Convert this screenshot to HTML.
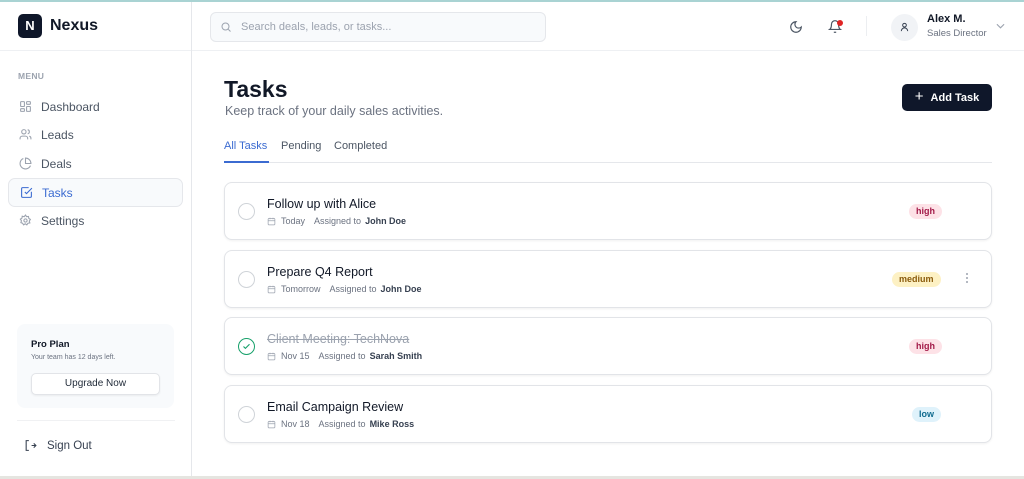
<!DOCTYPE html>
<html><head><style>
*{box-sizing:border-box;margin:0;padding:0}
body{width:1024px;height:479px;overflow:hidden;background:#fff;font-family:"Liberation Sans",sans-serif;color:#111827;position:relative}
.abs{position:absolute}
.top{left:0;top:0;width:1024px;height:2px;background:#a9d3d3}
.bot{left:0;top:476px;width:1024px;height:3px;background:#e5e5e0}
.side{left:0;top:2px;width:192px;height:474px;border-right:1px solid #e5e7eb;background:#fff}
.nav{position:absolute;left:8px;width:175px;height:29px;display:flex;align-items:center;padding-left:11px;font-size:12px;color:#4b5563}
.nav svg{margin-right:9px}
.nav.act{background:#f8fafc;border:1px solid #e5e7eb;border-radius:7px;color:#3b6bd1}
.card{position:absolute;left:224px;width:768px;height:58px;border:1px solid #e2e4e8;border-radius:8px;box-shadow:0 1px 2px rgba(0,0,0,.06);background:#fff}
.radio{position:absolute;left:13px;top:20px;width:17px;height:17px;border:1.5px solid #cfd3d8;border-radius:50%}
.tt{position:absolute;left:42px;top:14px;font-size:12.5px;color:#111827}
.meta{position:absolute;left:42px;top:33px;font-size:9px;color:#6b7280;display:flex;align-items:center}
.meta b{color:#374151;font-weight:600;margin-left:4px}
.badge{position:absolute;top:21px;height:15px;border-radius:8px;font-size:9px;font-weight:bold;line-height:15px;padding:0 7px}
.high{background:#fde2e7;color:#a21a48}
.med{background:#fdf1c4;color:#8a5a0b}
.low{background:#dff2fb;color:#0f6b8f}
</style></head><body>
<div class="abs top"></div>
<div class="abs side">
 <div class="abs" style="left:18px;top:12px;width:24px;height:24px;background:#0f172a;border-radius:5px;color:#fff;font-weight:bold;font-size:13px;text-align:center;line-height:24px">N</div>
 <div class="abs" style="left:50px;top:15px;font-size:16px;font-weight:bold">Nexus</div>
 <div class="abs" style="left:0;top:48px;width:191px;height:1px;background:#eef0f3"></div>
 <div class="abs" style="left:18px;top:69px;font-size:8.5px;font-weight:bold;color:#9ca3af;letter-spacing:.3px">MENU</div>
 <div class="nav" style="top:90px"><svg width="13" height="13" viewBox="0 0 24 24" fill="none" stroke="#9ca3af" stroke-width="2"><rect x="3" y="3" width="7" height="9" rx="1"/><rect x="14" y="3" width="7" height="5" rx="1"/><rect x="14" y="12" width="7" height="9" rx="1"/><rect x="3" y="16" width="7" height="5" rx="1"/></svg>Dashboard</div>
 <div class="nav" style="top:118px"><svg width="13" height="13" viewBox="0 0 24 24" fill="none" stroke="#9ca3af" stroke-width="2"><circle cx="9" cy="7" r="4"/><path d="M2 21v-2a4 4 0 0 1 4-4h6a4 4 0 0 1 4 4v2M16 3.1a4 4 0 0 1 0 7.8M22 21v-2a4 4 0 0 0-3-3.9"/></svg>Leads</div>
 <div class="nav" style="top:147px"><svg width="13" height="13" viewBox="0 0 24 24" fill="none" stroke="#9ca3af" stroke-width="2"><path d="M21.2 15.9A10 10 0 1 1 8 2.8"/><path d="M22 12A10 10 0 0 0 12 2v10z"/></svg>Deals</div>
 <div class="nav act" style="top:176px"><svg width="13" height="13" viewBox="0 0 24 24" fill="none" stroke="#3b6bd1" stroke-width="2"><path d="M21 10.5V19a2 2 0 0 1-2 2H5a2 2 0 0 1-2-2V5a2 2 0 0 1 2-2h11"/><path d="m9 11 3 3L22 4"/></svg>Tasks</div>
 <div class="nav" style="top:204px"><svg width="13" height="13" viewBox="0 0 24 24" fill="none" stroke="#9ca3af" stroke-width="2"><circle cx="12" cy="12" r="3"/><path d="M12 2l2 3 3.5-.5.5 3.5 3 2-2 3 1 3.5-3.5.5-2 3-3-2-3 2-2-3L3.5 16l1-3.5-2-3 3-2 .5-3.5L9.5 5z"/></svg>Settings</div>
 <div class="abs" style="left:17px;top:322px;width:157px;height:84px;background:#f8fafc;border-radius:8px">
  <div class="abs" style="left:14px;top:15px;font-size:9.5px;font-weight:bold">Pro Plan</div>
  <div class="abs" style="left:14px;top:30px;font-size:7px;color:#6b7280">Your team has 12 days left.</div>
  <div class="abs" style="left:14px;top:49px;width:129px;height:22px;background:#fff;border:1px solid #e2e4e8;border-radius:5px;box-shadow:0 1px 2px rgba(0,0,0,.06);font-size:10px;text-align:center;line-height:20px;color:#1f2937">Upgrade Now</div>
 </div>
 <div class="abs" style="left:17px;top:418px;width:158px;height:1px;background:#f0f1f3"></div>
 <div class="abs" style="left:24px;top:437px;display:flex;align-items:center;font-size:11.5px;color:#374151"><svg width="13" height="13" viewBox="0 0 24 24" fill="none" stroke="#374151" stroke-width="2" style="margin-right:10px"><path d="M9 3H4v18h5M14 12h8M18 8l4 4-4 4"/></svg>Sign Out</div>
</div>
<!-- header -->
<div class="abs" style="left:192px;top:50px;width:832px;height:1px;background:#eef0f3"></div>
<div class="abs" style="left:210px;top:12px;width:336px;height:30px;background:#f8fafc;border:1px solid #e5e7eb;border-radius:6px">
 <svg class="abs" style="left:9px;top:8px" width="12" height="12" viewBox="0 0 24 24" fill="none" stroke="#9ca3af" stroke-width="2"><circle cx="11" cy="11" r="7"/><path d="m21 21-4.3-4.3"/></svg>
 <div class="abs" style="left:30px;top:8px;font-size:11px;color:#9ca3af">Search deals, leads, or tasks...</div>
</div>
<svg class="abs" style="left:789px;top:20px" width="14" height="14" viewBox="0 0 24 24" fill="none" stroke="#4b5563" stroke-width="2"><path d="M12 3a6 6 0 0 0 9 9 9 9 0 1 1-9-9z"/></svg>
<svg class="abs" style="left:828px;top:19px" width="14" height="15" viewBox="0 0 24 24" fill="none" stroke="#4b5563" stroke-width="2"><path d="M6 8a6 6 0 0 1 12 0c0 7 3 9 3 9H3s3-2 3-9M10.3 21a1.9 1.9 0 0 0 3.4 0"/></svg>
<div class="abs" style="left:837px;top:20px;width:6px;height:6px;border-radius:50%;background:#e02424"></div>
<div class="abs" style="left:866px;top:16px;width:1px;height:20px;background:#eceef1"></div>
<div class="abs" style="left:891px;top:14px;width:27px;height:27px;border-radius:50%;background:#f1f3f6"></div>
<svg class="abs" style="left:899px;top:21px" width="11" height="12" viewBox="0 0 24 24" fill="none" stroke="#374151" stroke-width="2.2"><circle cx="12" cy="8" r="4"/><path d="M5 21a7 7 0 0 1 14 0"/></svg>
<div class="abs" style="left:927px;top:13px;font-size:11px;font-weight:bold">Alex M.</div>
<div class="abs" style="left:927px;top:28px;font-size:9.5px;color:#6b7280">Sales Director</div>
<svg class="abs" style="left:996px;top:23px" width="9" height="6" viewBox="0 0 10 6" fill="none" stroke="#9ca3af" stroke-width="1.2"><path d="M1 1l4 4 4-4"/></svg>
<!-- main -->
<div class="abs" style="left:224px;top:76px;font-size:23px;font-weight:bold">Tasks</div>
<div class="abs" style="left:225px;top:104px;font-size:12.5px;color:#6b7280">Keep track of your daily sales activities.</div>
<div class="abs" style="left:902px;top:84px;width:90px;height:27px;background:#0f172a;border-radius:5px;color:#fff;font-size:11px;font-weight:bold;display:flex;align-items:center;justify-content:center"><span style="font-size:15px;font-weight:normal;margin-right:7px;margin-top:-2px">+</span>Add Task</div>
<div class="abs" style="left:224px;top:140px;font-size:11px;color:#3b6bd1">All Tasks</div>
<div class="abs" style="left:281px;top:140px;font-size:11px;color:#4b5563">Pending</div>
<div class="abs" style="left:334px;top:140px;font-size:11px;color:#4b5563">Completed</div>
<div class="abs" style="left:224px;top:162px;width:768px;height:1px;background:#e5e7eb"></div>
<div class="abs" style="left:224px;top:161px;width:45px;height:2px;background:#3b6bd1"></div>

<div class="card" style="top:182px"><div class="radio"></div><div class="tt">Follow up with Alice</div>
<div class="meta"><svg width="9" height="9" viewBox="0 0 24 24" fill="none" stroke="#9ca3af" stroke-width="2" style="margin-right:5px"><rect x="3" y="4" width="18" height="17" rx="2"/><path d="M3 10h18M8 2v4M16 2v4"/></svg>Today<span style="margin-left:9px">Assigned to</span><b>John Doe</b></div>
<div class="badge high" style="left:684px">high</div></div>

<div class="card" style="top:250px"><div class="radio"></div><div class="tt">Prepare Q4 Report</div>
<div class="meta"><svg width="9" height="9" viewBox="0 0 24 24" fill="none" stroke="#9ca3af" stroke-width="2" style="margin-right:5px"><rect x="3" y="4" width="18" height="17" rx="2"/><path d="M3 10h18M8 2v4M16 2v4"/></svg>Tomorrow<span style="margin-left:9px">Assigned to</span><b>John Doe</b></div>
<div class="badge med" style="left:667px">medium</div>
<div class="abs" style="left:741px;top:22px;width:2px;height:2px;background:#9ca3af;box-shadow:0 4px 0 #9ca3af,0 8px 0 #9ca3af;border-radius:1px"></div></div>

<div class="card" style="top:317px"><div class="radio" style="border:1.5px solid #16a06a"><svg class="abs" style="left:3px;top:3px" width="9" height="9" viewBox="0 0 24 24" fill="none" stroke="#16a06a" stroke-width="3"><path d="M4 12l5 5L20 6"/></svg></div><div class="tt" style="color:#9ca3af;text-decoration:line-through">Client Meeting: TechNova</div>
<div class="meta"><svg width="9" height="9" viewBox="0 0 24 24" fill="none" stroke="#9ca3af" stroke-width="2" style="margin-right:5px"><rect x="3" y="4" width="18" height="17" rx="2"/><path d="M3 10h18M8 2v4M16 2v4"/></svg>Nov 15<span style="margin-left:9px">Assigned to</span><b>Sarah Smith</b></div>
<div class="badge high" style="left:684px">high</div></div>

<div class="card" style="top:385px"><div class="radio"></div><div class="tt">Email Campaign Review</div>
<div class="meta"><svg width="9" height="9" viewBox="0 0 24 24" fill="none" stroke="#9ca3af" stroke-width="2" style="margin-right:5px"><rect x="3" y="4" width="18" height="17" rx="2"/><path d="M3 10h18M8 2v4M16 2v4"/></svg>Nov 18<span style="margin-left:9px">Assigned to</span><b>Mike Ross</b></div>
<div class="badge low" style="left:687px">low</div></div>
<div class="abs bot"></div>
</body></html>
